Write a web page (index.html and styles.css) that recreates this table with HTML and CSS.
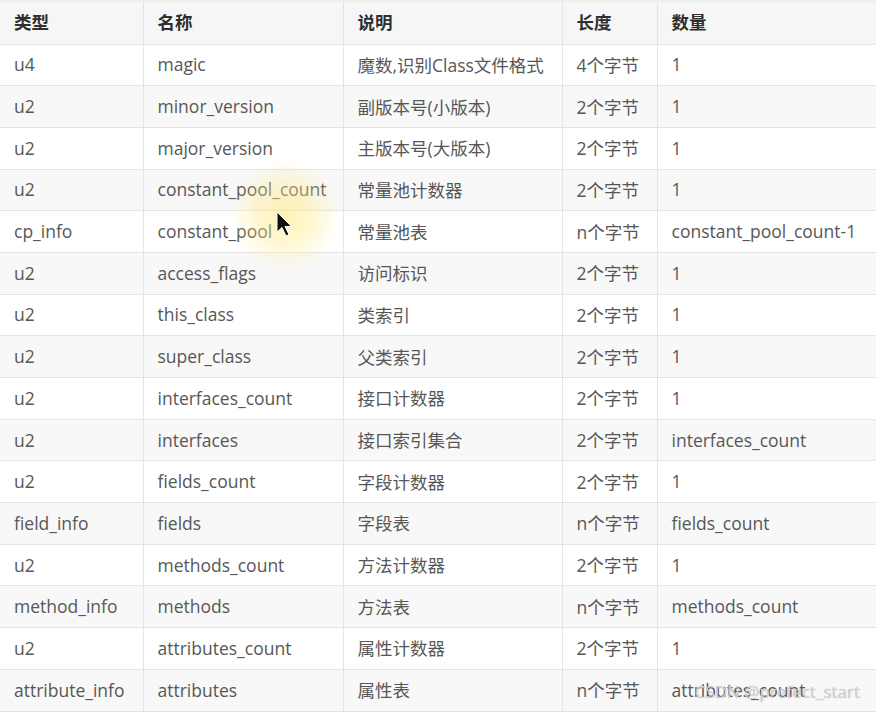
FILE: index.html
```html
<!DOCTYPE html>
<html>
<head>
<meta charset="utf-8">
<link rel="stylesheet" href="styles.css">
</head>
<body>
<div class="page">
<table class="tbl">
<colgroup><col class="c1"><col class="c2"><col class="c3"><col class="c4"><col class="c5"></colgroup>
<thead>
<tr><th>类型</th><th>名称</th><th>说明</th><th>长度</th><th>数量</th></tr>
</thead>
<tbody>
<tr><td>u4</td><td>magic</td><td>魔数,识别Class文件格式</td><td>4个字节</td><td>1</td></tr>
<tr><td>u2</td><td>minor_version</td><td>副版本号(小版本)</td><td>2个字节</td><td>1</td></tr>
<tr><td>u2</td><td>major_version</td><td>主版本号(大版本)</td><td>2个字节</td><td>1</td></tr>
<tr><td>u2</td><td>constant_pool_count</td><td>常量池计数器</td><td>2个字节</td><td>1</td></tr>
<tr><td>cp_info</td><td>constant_pool</td><td>常量池表</td><td>n个字节</td><td>constant_pool_count-1</td></tr>
<tr><td>u2</td><td>access_flags</td><td>访问标识</td><td>2个字节</td><td>1</td></tr>
<tr><td>u2</td><td>this_class</td><td>类索引</td><td>2个字节</td><td>1</td></tr>
<tr><td>u2</td><td>super_class</td><td>父类索引</td><td>2个字节</td><td>1</td></tr>
<tr><td>u2</td><td>interfaces_count</td><td>接口计数器</td><td>2个字节</td><td>1</td></tr>
<tr><td>u2</td><td>interfaces</td><td>接口索引集合</td><td>2个字节</td><td>interfaces_count</td></tr>
<tr><td>u2</td><td>fields_count</td><td>字段计数器</td><td>2个字节</td><td>1</td></tr>
<tr><td>field_info</td><td>fields</td><td>字段表</td><td>n个字节</td><td>fields_count</td></tr>
<tr><td>u2</td><td>methods_count</td><td>方法计数器</td><td>2个字节</td><td>1</td></tr>
<tr><td>method_info</td><td>methods</td><td>方法表</td><td>n个字节</td><td>methods_count</td></tr>
<tr><td>u2</td><td>attributes_count</td><td>属性计数器</td><td>2个字节</td><td>1</td></tr>
<tr><td>attribute_info</td><td>attributes</td><td>属性表</td><td>n个字节</td><td>attributes_count</td></tr>
</tbody>
</table>
<div class="glow"></div>
<svg class="cursor" width="18" height="28" viewBox="0 0 18 28"><path d="M1 1 L1 21 L6 16.5 L10 25 L13 23.5 L9 15.5 L15.5 15.5 Z" fill="#111" stroke="#fff" stroke-width="1"/></svg>
<div class="watermark">CSDN @prefect_start</div>
</div>
</body>
</html>
```
FILE: styles.css
```css
html, body {
  margin: 0;
  padding: 0;
  background: #ffffff;
}
.page {
  position: relative;
  width: 876px;
  height: 715px;
  overflow: hidden;
  font-family: "Open Sans", "Noto Sans CJK SC", sans-serif;
}
.tbl {
  width: 876px;
  border-collapse: collapse;
  table-layout: fixed;
  border-top: 2px solid #e8f3e4;
  font-size: 17.5px;
  color: #575757;
}
.c1 { width: 143px; }
.c2 { width: 200px; }
.c3 { width: 219px; }
.c4 { width: 95px; }
.c5 { width: 219px; }
.tbl th, .tbl td {
  border: 1px solid #e4e4e4;
  text-align: left;
  padding: 0 0 0 14px;
  white-space: nowrap;
  overflow: visible;
  box-sizing: border-box;
}
.tbl tr {
  height: 41.7px;
}
.tbl thead tr {
  height: 43px;
}
.tbl th {
  background: #f6f6f6;
  color: #2f2f2f;
  font-weight: 700;
  font-size: 17.5px;
  font-family: "Noto Sans CJK SC", sans-serif;
  padding-bottom: 2px;
}
.tbl td {
  padding-bottom: 1px;
}
.tbl tbody tr:nth-child(even) td {
  background: #f8f8f8;
}
.tbl th:first-child, .tbl td:first-child { border-left: none; }
.tbl th:last-child, .tbl td:last-child { border-right: none; }
.glow {
  position: absolute;
  left: 230px;
  top: 160px;
  width: 110px;
  height: 110px;
  border-radius: 50%;
  background: radial-gradient(circle, rgba(255, 230, 120, 0.55) 0%, rgba(255, 235, 140, 0.35) 40%, rgba(255, 240, 170, 0) 70%);
  pointer-events: none;
}
.cursor {
  position: absolute;
  left: 276px;
  top: 211px;
}
.watermark {
  position: absolute;
  right: 16px;
  top: 680px;
  font-family: "Open Sans", sans-serif;
  font-size: 17px;
  color: rgba(215, 215, 215, 0.9);
  text-shadow: 0 0 1px rgba(110,110,110,0.5);
}
```
